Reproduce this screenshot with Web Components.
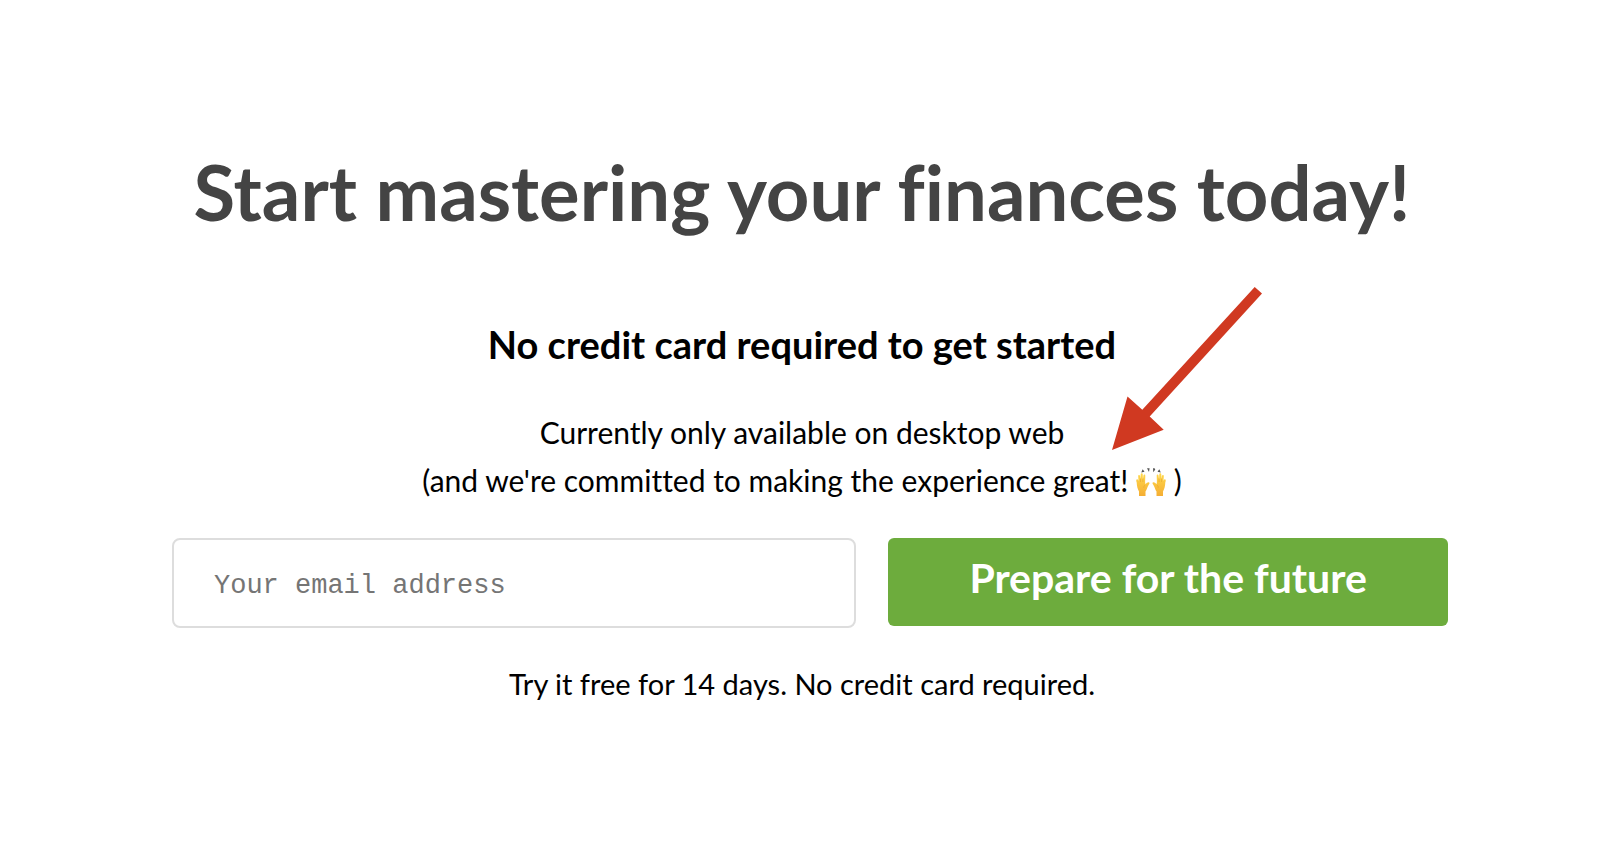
<!DOCTYPE html>
<html lang="en">
<head>
<meta charset="utf-8">
<meta name="viewport" content="width=device-width, initial-scale=1">
<title>Start mastering your finances today!</title>
<style>
  body { margin: 0; background: #fff; color: #000; font-family: Lato, "Open Sans", sans-serif; font-variant-ligatures: none; }
</style>
</head>
<body>
<signup-section>
  <span slot="title">Start mastering your finances today!</span>
  <span slot="subtitle">No credit card required to get started</span>
  <availability-note slot="note"></availability-note>
  <signup-form slot="form">Prepare for the future</signup-form>
  <span slot="footnote">Try it free for 14 days. No credit card required.</span>
</signup-section>

<script>
class SignupSection extends HTMLElement {
  constructor() {
    super();
    this.attachShadow({ mode: "open" }).innerHTML = `
      <style>
        :host { display: block; padding: 144px 164px 96px 156px; text-align: center; }
        h1, h2, p { margin: 0; }
        h1 { color: #444; font-size: 76px; line-height: 96px; font-weight: 700; }
        h2 { margin-top: 80px; font-size: 38px; line-height: 48px; font-weight: 700; }
        .note { margin-top: 40px; }
        .form { margin: 34px 0 0 16px; }
        .foot { margin-top: 32px; font-size: 29px; line-height: 48px; }
      </style>
      <h1><slot name="title"></slot></h1>
      <h2><slot name="subtitle"></slot></h2>
      <div class="note"><slot name="note"></slot></div>
      <div class="form"><slot name="form"></slot></div>
      <p class="foot"><slot name="footnote"></slot></p>`;
  }
}

class AvailabilityNote extends HTMLElement {
  constructor() {
    super();
    this.attachShadow({ mode: "open" }).innerHTML = `
      <style>
        :host { display: block; position: relative; font-size: 30px; line-height: 48px; }
        p { margin: 0; }
        pointer-arrow { position: absolute; left: 50%; bottom: 54px; margin-left: 310px; }
      </style>
      <p>Currently only available on desktop web<br>(and we're committed to making the experience great! <raised-hands></raised-hands> )</p>
      <pointer-arrow></pointer-arrow>`;
  }
}

class RaisedHands extends HTMLElement {
  constructor() {
    super();
    this.attachShadow({ mode: "open" }).innerHTML = `
      <style>
        :host { display: inline-block; width: 30px; height: 28px; line-height: 0; vertical-align: -4px; }
        svg { display: block; width: 100%; height: 100%; }
      </style>
      <svg viewBox="0 0 30 28" role="img" aria-label="Raised hands">
        <defs>
          <linearGradient id="skin" x1="0" y1="0" x2="0" y2="1">
            <stop offset="0" stop-color="#ffd84a"/><stop offset="1" stop-color="#f5ae34"/>
          </linearGradient>
          <g id="hand">
            <path fill="url(#skin)" d="M3 28V23.500C1.600 21 .8 18 .7 14.500C0 12.800.1 11.300 1.100 11.300C2 11.300 2.300 12.300 2.600 13.200L2.200 8.300C2.100 6.800 3.800 6.700 4.100 8.100L4.500 11.500L4.700 6.300C4.800 4.900 6.600 4.900 6.700 6.300L6.900 11.500L7.500 7.300C7.800 6 9.400 6.300 9.300 7.700L9.100 14L9.400 16.300C10.500 15 12.300 13.800 13.200 14.500C14 15.200 13.100 16.100 12.300 17.500C11.200 19.600 10.600 21.800 9.500 23.500V28Z"/>
            <path fill="none" stroke="#e29a2d" stroke-width=".5" d="M4.500 10.500V14M6.900 10.500V14M8.700 17.200C8 18 7.700 18.700 7.800 19.800"/>
          </g>
        </defs>
        <use href="#hand"/>
        <use href="#hand" transform="translate(30 0) scale(-1 1)"/>
        <path fill="#555" d="M5.200 4.400L6.700 1.300L8.500 3.700ZM11 .2H13.600L13 4.100ZM17 .2C18.500 0 19.600.7 19.100 1.700L17.300 4.200ZM21.500 3.700L23.300 1.300L24.800 4.400Z"/>
      </svg>`;
  }
}

class PointerArrow extends HTMLElement {
  constructor() {
    super();
    this.attachShadow({ mode: "open" }).innerHTML = `
      <style>
        :host { display: block; width: 150px; height: 163px; pointer-events: none; }
        svg { display: block; }
      </style>
      <svg width="150" height="163" viewBox="0 0 150 163" aria-hidden="true">
        <path fill="#d03921" d="M0 163L15.500 109.500L30.300 122.700L142.700 0L150 6.600L37.700 129.400L51.700 142.700Z"/>
      </svg>`;
  }
}

class SignupForm extends HTMLElement {
  constructor() {
    super();
    this.attachShadow({ mode: "open" }).innerHTML = `
      <style>
        :host { display: block; }
        form { display: grid; grid-template-columns: 55fr 45fr; align-items: start; gap: 32px; }
        input, button { box-sizing: border-box; width: 100%; min-width: 0; margin: 0; }
        input {
          height: 90px; padding: 6px 40px 0; border: 2px solid #ddd; border-radius: 8px;
          background: #fff; color: #444; font: 27px "Liberation Mono", monospace;
        }
        input::placeholder { color: #757575; opacity: 1; }
        button {
          height: 88px; padding: 0 16px 8px; border: 0; border-radius: 6px;
          background: #6dac3d; color: #fff; font: 700 41px/48px Lato, "Open Sans", sans-serif; cursor: pointer;
        }
      </style>
      <form>
        <input type="email" name="email" aria-label="Your email address" placeholder="Your email address">
        <button type="submit"><slot></slot></button>
      </form>`;
  }
}

customElements.define("raised-hands", RaisedHands);
customElements.define("pointer-arrow", PointerArrow);
customElements.define("availability-note", AvailabilityNote);
customElements.define("signup-form", SignupForm);
customElements.define("signup-section", SignupSection);
</script>
</body>
</html>
